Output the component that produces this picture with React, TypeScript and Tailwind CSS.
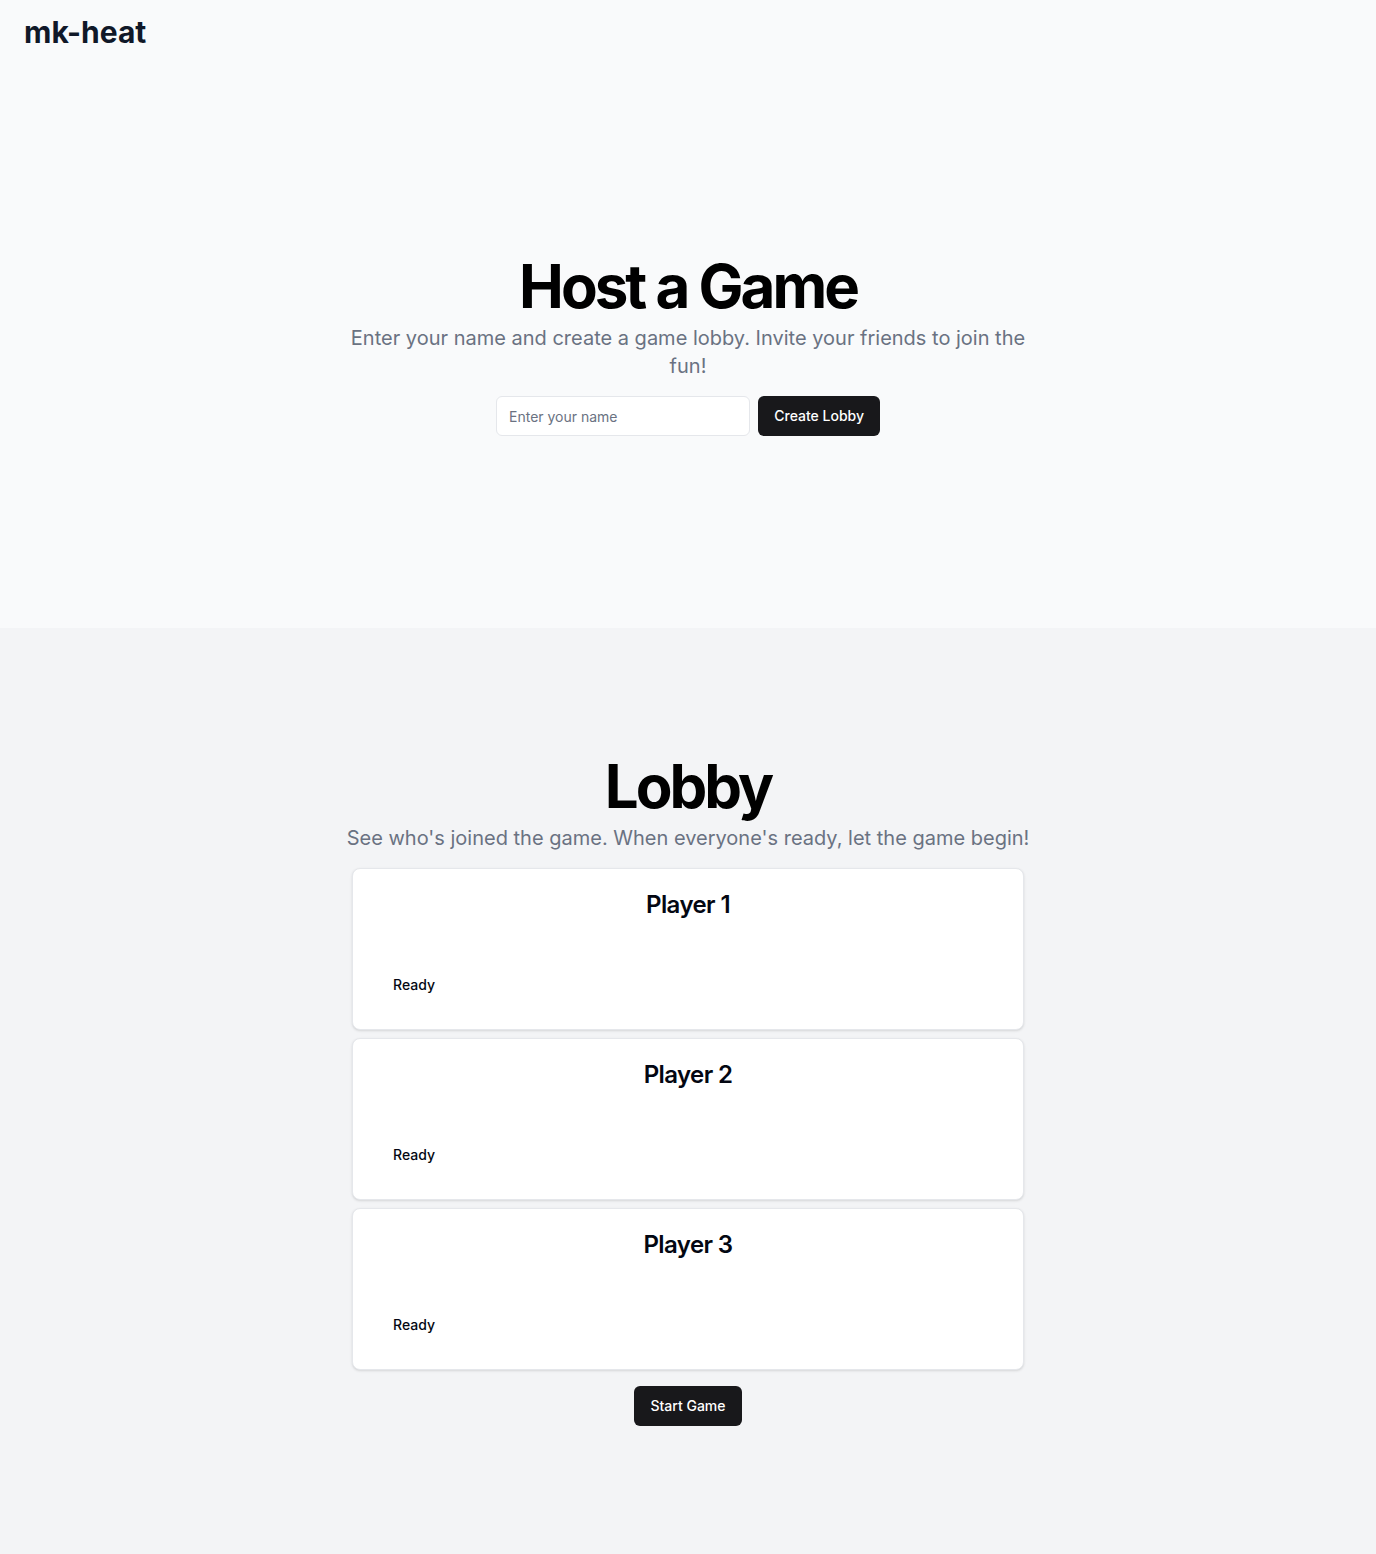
import React, { useState } from 'react';

const players = ['Player 1', 'Player 2', 'Player 3'];

const App = () => {
  const [name, setName] = useState('');

  return (
    <div className="min-h-screen bg-gray-100 font-['Inter',sans-serif]">
      {/* Host section */}
      <div className="bg-gray-50">
        <header className="h-16 px-6 flex items-center">
          <h1 className="text-3xl font-bold text-gray-900">mk-heat</h1>
        </header>
        <section className="pt-[192px] pb-[192px] px-4 flex flex-col items-center text-center">
          <div className="flex flex-col items-center gap-2">
            <h2 className="text-6xl font-bold tracking-tighter text-black">Host a Game</h2>
            <p className="max-w-[700px] text-xl text-gray-500">
              Enter your name and create a game lobby. Invite your friends to join the fun!
            </p>
          </div>
          <form className="mt-4 w-full max-w-sm flex gap-2" onSubmit={e => e.preventDefault()}>
            <input
              className="flex-1 h-10 rounded-md border border-gray-200 bg-white px-3 text-sm text-gray-900 placeholder:text-gray-500 focus:outline-none"
              placeholder="Enter your name"
              value={name}
              onChange={e => setName(e.target.value)}
            />
            <button className="h-10 px-4 rounded-md bg-[#18181b] text-white text-sm font-medium">
              Create Lobby
            </button>
          </form>
        </section>
      </div>

      {/* Lobby section */}
      <section className="pt-32 pb-32 px-4 flex flex-col items-center text-center">
        <div className="flex flex-col items-center gap-2">
          <h2 className="text-6xl font-bold tracking-tighter text-black">Lobby</h2>
          <p className="max-w-[700px] text-xl text-gray-500">
            See who's joined the game. When everyone's ready, let the game begin!
          </p>
        </div>
        <div className="mt-4 w-full max-w-2xl flex flex-col gap-2">
          {players.map(p => (
            <div key={p} className="rounded-lg border border-gray-200 bg-white shadow-sm text-left">
              <div className="p-6">
                <h3 className="text-2xl font-semibold leading-none tracking-tight text-center text-gray-950">{p}</h3>
              </div>
              <div className="px-10 py-[34px]">
                <p className="text-sm font-medium text-gray-950">Ready</p>
              </div>
            </div>
          ))}
        </div>
        <button className="mt-4 h-10 px-4 rounded-md bg-[#18181b] text-white text-sm font-medium">
          Start Game
        </button>
      </section>
    </div>
  );
};

export default App;
